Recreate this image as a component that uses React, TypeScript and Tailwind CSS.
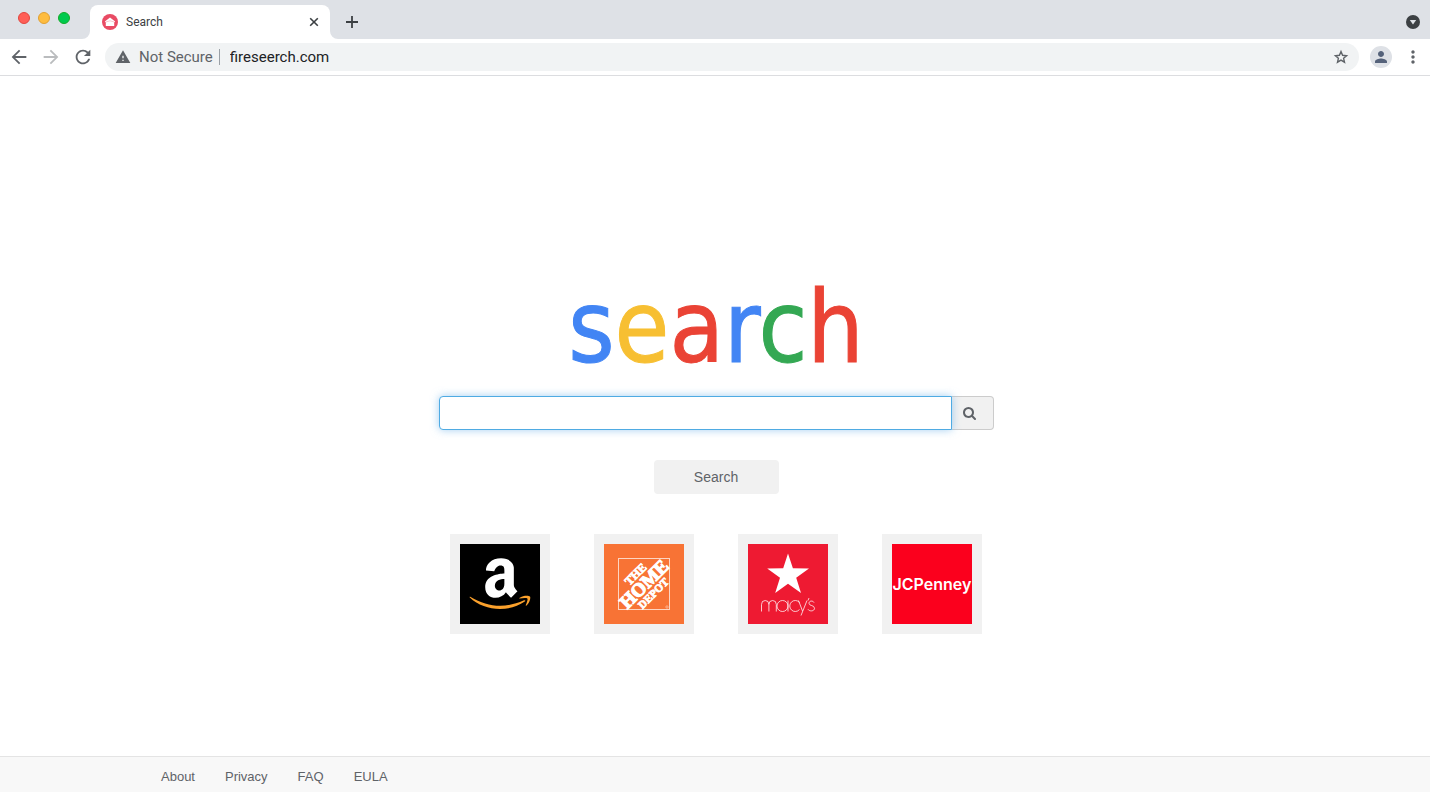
import { MdArrowBack, MdArrowForward, MdRefresh, MdWarning, MdPerson, MdMoreVert } from "react-icons/md";

function Favicon() {
  return (
    <svg viewBox="0 0 16 16" className="size-4 shrink-0" aria-hidden="true">
      <circle cx="8" cy="8" r="8" fill="#e94b64" />
      <path d="M8 3.600 13.200 7.400 12.200 8.300V12H3.800V8.300L2.800 7.400Z" fill="#fff" />
      <path d="M3.500 8.100 8 6.800l4.500 1.300" fill="none" stroke="#f3a0ad" strokeWidth=".6" />
    </svg>
  );
}

function AmazonLogo() {
  return (
    <svg viewBox="0 0 80 80" className="size-20 bg-black" aria-hidden="true">
      <g transform="translate(15.300 10.500) scale(.113 .117)">
        <path
          fill="#fff"
          d="M257.2 162.7c-48.7 1.8-169.5 15.5-169.5 117.5 0 109.5 138.3 114 183.5 43.2 6.5 10.2 35.4 37.5 45.3 46.8l56.800-56S341 288.900 341 261.400V114.300C341 89 316.500 32 228.700 32 140.700 32 94 87 94 136.300l73.500 6.800c16.300-49.500 54.200-49.500 54.200-49.500 40.700-.1 35.500 29.800 35.500 69.100zm0 86.800c0 80-84.200 68-84.200 17.200 0-47.200 50.500-56.700 84.200-57.800v40.600z"
        />
      </g>
      <path d="M9.800 53.600C9.300 53 10 52.600 10.600 53 28 63.600 46 64.500 64 56.300 65.200 55.800 65.800 56.800 64.800 57.600 49 68.600 24 67.200 9.800 53.600Z" fill="#fba12c" />
      <path d="M59.300 53.900C63 51.500 68.500 51.400 70 52.500 71 53.800 69.500 59 66.500 61.600 65.900 62 65.500 61.700 65.800 61 67 58.200 68 55.300 67.400 54.500 66.500 53.600 62.500 54 59.800 54.400 59.200 54.500 59 54.200 59.300 53.900Z" fill="#fba12c" />
    </svg>
  );
}

function HomeDepotLogo() {
  return (
    <svg viewBox="0 0 80 80" className="size-20 bg-[#f87335]" aria-hidden="true">
      <rect x="14.500" y="14.500" width="51" height="51" fill="none" stroke="#fff" strokeOpacity=".7" />
      <g
        transform="translate(40 40) rotate(-45)"
        fill="#fff"
        stroke="#fff"
        strokeWidth=".8"
        textAnchor="middle"
        className="font-['Liberation_Serif',serif] font-bold"
      >
        <text x="1" y="-9" fontSize="12">THE</text>
        <text x="0" y="6.500" fontSize="19" strokeWidth="1.200">HOME</text>
        <text x="0" y="17" fontSize="11" strokeWidth=".8">DEPOT</text>
      </g>
      <circle cx="63" cy="63" r="1.200" fill="none" stroke="#fff" strokeWidth=".4" />
    </svg>
  );
}

function MacysLogo() {
  return (
    <svg viewBox="0 0 80 80" className="size-20 bg-[#ee1a32]" aria-hidden="true">
      <path d="M40 9.500 44.900 24.300 61 24.500 48.200 33.800 53 49 40 39.800 27.200 49 32 33.800 19.200 24.500 35.200 24.300Z" fill="#fff" />
      <g fill="none" stroke="#fff" strokeOpacity=".75" strokeWidth="1">
        <path d="M13.500 67.500V60.500a3.700 4 0 0 1 7.400 0V67.500M20.900 60.500a3.700 4 0 0 1 7.400 0V67.500" />
        <circle cx="34.500" cy="62" r="5.500" />
        <path d="M40 56.500v11M51.500 58.500a5.500 5.500 0 1 0 0 7M50.500 56.500l4 10.500M59 56.500 53 71.500M61 54l-1 2.500" />
        <path d="M66 58.500c-1-2-5-2-5 .8 0 3 5.500 1.500 5.500 5 0 3-5 3.500-6.500 1" />
      </g>
    </svg>
  );
}

function JcpLogo() {
  return (
    <svg viewBox="0 0 80 80" className="size-20 bg-[#fb001d]" aria-hidden="true">
      <text x="40" y="46" textAnchor="middle" fill="#fff" fontSize="16" className="font-[Inter,sans-serif] font-semibold">
        JCPenney
      </text>
    </svg>
  );
}

const shops = [
  { name: "Amazon", Logo: AmazonLogo },
  { name: "The Home Depot", Logo: HomeDepotLogo },
  { name: "Macy's", Logo: MacysLogo },
  { name: "JCPenney", Logo: JcpLogo },
];

function TabStrip() {
  return (
    <div className="flex h-[39px] items-end bg-[#dee1e6]">
      <div className="flex h-full w-[82px] shrink-0 items-start gap-2 pt-3 pl-[18px]">
        <button aria-label="Close window" className="size-3 rounded-full border border-[#e2463f] bg-[#ff5f57]" />
        <button aria-label="Minimize window" className="size-3 rounded-full border border-[#e1a032] bg-[#febc3f]" />
        <button aria-label="Zoom window" className="size-3 rounded-full border border-[#12ac28] bg-[#00ca4e]" />
      </div>
      <svg viewBox="0 0 8 8" className="size-2 shrink-0" aria-hidden="true">
        <path d="M8 0V8H0A8 8 0 0 0 8 0" fill="#fff" />
      </svg>
      <div className="flex h-[34px] w-60 shrink-0 items-center rounded-t-lg bg-white pr-2 pl-3">
        <Favicon />
        <span className="ml-2 flex-1 text-xs text-[#3c4043]">Search</span>
        <button aria-label="Close tab" className="flex size-4 items-center justify-center text-[#3c4043]">
          <svg viewBox="0 0 16 16" className="size-4" fill="none" stroke="currentColor" strokeWidth="1.600">
            <path d="M4.200 4.200l7.600 7.600M11.800 4.200l-7.600 7.600" />
          </svg>
        </button>
      </div>
      <svg viewBox="0 0 8 8" className="size-2 shrink-0" aria-hidden="true">
        <path d="M0 0V8H8A8 8 0 0 1 0 0" fill="#fff" />
      </svg>
      <button aria-label="New tab" className="flex h-[34px] w-7 items-center justify-center text-[#3c4043]">
        <svg viewBox="0 0 16 16" className="size-4" fill="none" stroke="currentColor" strokeWidth="1.800">
          <path d="M8 2v12M2 8h12" />
        </svg>
      </button>
      <button aria-label="Search tabs" className="mr-2.5 mb-2.5 ml-auto size-3.5">
        <svg viewBox="0 0 14 14" className="size-3.5">
          <circle cx="7" cy="7" r="7" fill="#3c4043" />
          <path d="M3.800 5h6.400L7 9.500Z" fill="#dee1e6" />
        </svg>
      </button>
    </div>
  );
}

function Toolbar() {
  return (
    <div className="flex h-[37px] items-center border-b border-[#dcdde0] bg-white pl-2">
      <div className="flex w-[97px] shrink-0 gap-2.5 text-[#5f6368]">
        <button aria-label="Back"><MdArrowBack className="size-[22px]" /></button>
        <button aria-label="Forward" className="text-[#babcbe]"><MdArrowForward className="size-[22px]" /></button>
        <button aria-label="Reload"><MdRefresh className="size-[22px]" /></button>
      </div>
      <div className="flex h-7 flex-1 items-center rounded-full bg-[#f1f3f4] pr-2.5 pl-2.5 text-[15px]">
        <MdWarning className="size-4 shrink-0 text-[#5f6368]" />
        <span className="ml-2 whitespace-nowrap text-[#5f6368]">Not Secure</span>
        <span className="mr-2.5 ml-1.5 h-4 w-px bg-[#9aa0a6]" />
        <input aria-label="Address" defaultValue="fireseerch.com" className="min-w-0 flex-1 bg-transparent text-[#202124] outline-none" />
        <button aria-label="Bookmark this page" className="text-[#5f6368]">
          <svg viewBox="0 0 16 16" className="size-4" fill="none" stroke="currentColor" strokeWidth="1.400" strokeLinejoin="miter">
            <path d="M8 2.600 9.600 6.300 13.600 6.700 10.600 9.300 11.500 13.200 8 11.100 4.500 13.200 5.400 9.300 2.400 6.700 6.400 6.300Z" />
          </svg>
        </button>
      </div>
      <button aria-label="Profile" className="ml-[11px] flex size-[22px] items-center justify-center rounded-full bg-[#dee1e6] text-[#55627a]">
        <MdPerson className="size-[18px]" />
      </button>
      <button aria-label="Menu" className="mr-[7px] ml-[11px] text-[#5f6368]"><MdMoreVert className="size-5" /></button>
    </div>
  );
}

export default function App() {
  return (
    <div className="flex min-h-screen flex-col bg-white">
      <header className="font-[Roboto,sans-serif]">
        <TabStrip />
        <Toolbar />
      </header>
      <main className="flex flex-1 flex-col items-center pt-[186px] pr-4 pl-[18px] font-['Liberation_Sans',sans-serif]">
        <h1 className="mb-0.5 font-['DejaVu_Sans_Condensed',sans-serif] text-[99px] leading-[132px]">
          <span className="text-[#4285f4] [-webkit-text-stroke:1px_#4285f4]">s</span>
          <span className="text-[#f7bf32] [-webkit-text-stroke:1px_#f7bf32]">e</span>
          <span className="text-[#ea4335] [-webkit-text-stroke:1px_#ea4335]">a</span>
          <span className="text-[#4285f4] [-webkit-text-stroke:1px_#4285f4]">r</span>
          <span className="text-[#34a853] [-webkit-text-stroke:1px_#34a853]">c</span>
          <span className="text-[#ea4335] [-webkit-text-stroke:1px_#ea4335]">h</span>
        </h1>
        <form className="flex w-full max-w-[555px] flex-col items-center" onSubmit={(e) => e.preventDefault()}>
          <div className="flex w-full">
            <input
              type="text"
              aria-label="Search query"
              className="relative h-[34px] min-w-0 flex-1 rounded-l border border-[#4fabe3] bg-white px-3 text-sm shadow-[0_0_8px_rgba(102,175,233,0.6)] outline-none"
            />
            <button type="submit" aria-label="Go" className="flex w-[42px] items-center rounded-r border border-l-0 border-[#ccc] bg-[#f1f1f1] pl-[11px] text-[#5f6368]">
              <svg viewBox="0 0 1664 1792" className="h-3.5 w-[13px]" fill="currentColor">
                <path d="M1152 832q0-185-131.500-316.500T704 384 387.500 515.500 256 832t131.500 316.500T704 1280t316.500-131.500T1152 832zm512 832q0 52-38 90t-90 38q-54 0-90-38l-343-342q-179 124-399 124-143 0-273.500-55.500t-225-150-150-225T0 832t55.500-273.500 150-225 225-150T704 128t273.500 55.500 225 150 150 225T1408 832q0 220-124 399l343 343q37 37 37 90z" />
              </svg>
            </button>
          </div>
          <button type="submit" className="mt-[30px] h-[34px] w-[125px] rounded bg-[#f1f1f1] text-sm text-[#5f6368]">Search</button>
        </form>
        <nav aria-label="Shops" className="mt-10 flex flex-wrap justify-center gap-11">
          {shops.map(({ name, Logo }) => (
            <a key={name} href="#" aria-label={name} className="bg-[#f1f1f1] p-2.5">
              <Logo />
            </a>
          ))}
        </nav>
      </main>
      <footer className="flex h-9 items-center gap-[30px] border-t border-[#e4e4e4] bg-[#f8f8f8] px-[161px] pt-1 font-['Liberation_Sans',sans-serif] text-[13px] text-[#5f6368]">
        <a href="#">About</a>
        <a href="#">Privacy</a>
        <a href="#">FAQ</a>
        <a href="#">EULA</a>
      </footer>
    </div>
  );
}
